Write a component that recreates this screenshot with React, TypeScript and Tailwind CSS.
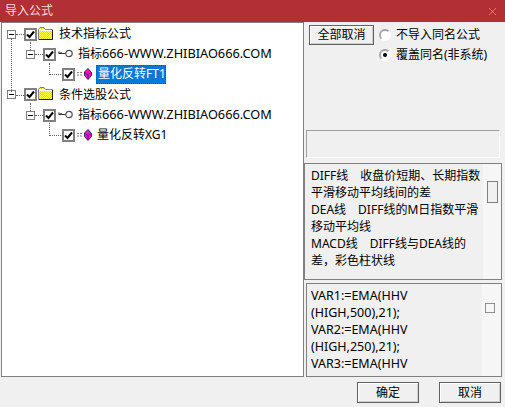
import type { ReactNode } from 'react'
import { X } from 'lucide-react'

const font = { fontFamily: '"Noto Sans", "Noto Sans CJK SC", sans-serif' }

function Expander() {
  return (
    <span className="flex h-[9px] w-[9px] shrink-0 items-center justify-center border border-[#808080] bg-white">
      <span className="h-px w-[5px] bg-black" />
    </span>
  )
}

function Check() {
  return (
    <span className="flex h-[13px] w-[13px] shrink-0 items-center justify-center border-2 border-[#808080] bg-white">
      <svg width="9" height="9" viewBox="0 0 9 9">
        <path d="M1 4.5 L3.5 7 L8 1.5" fill="none" stroke="#000" strokeWidth="2" />
      </svg>
    </span>
  )
}

function Folder({ id }: { id: string }) {
  return (
    <svg width="15" height="13" viewBox="0 0 15 13" className="shrink-0">
      <defs>
        <pattern id={id} width="2" height="2" patternUnits="userSpaceOnUse">
          <rect width="2" height="2" fill="#ffff40" />
          <rect width="1" height="1" fill="#d8d860" />
          <rect x="1" y="1" width="1" height="1" fill="#d8d860" />
        </pattern>
      </defs>
      <path d="M0.5 12.5 V2.5 L2 0.5 H6 L7.5 2.5 H14.5 V12.5 Z" fill={`url(#${id})`} stroke="#808080" />
      <path d="M1 2.5 H7 M1.5 3.5 H14" stroke="#fff" />
      <path d="M1 12.5 H14.5 V3" fill="none" stroke="#202020" />
    </svg>
  )
}

function Key() {
  return (
    <svg width="15" height="9" viewBox="0 0 15 9" className="shrink-0">
      <circle cx="11" cy="4.5" r="3.2" fill="#fff" stroke="#505050" strokeWidth="1.2" />
      <path d="M0.5 4.5 H7.5 M1 4.5 V2.5 M3 4.5 V3" fill="none" stroke="#303030" strokeWidth="1.2" />
    </svg>
  )
}

function Gem() {
  return (
    <svg width="15" height="12" viewBox="0 0 15 12" className="shrink-0">
      <path d="M0 4.5 H6 M0 7 H6" stroke="#808080" strokeDasharray="2 1" />
      <path d="M11 0.5 L14.5 4.5 V7.5 L11 11.5 L7.5 7.5 V4 Z" fill="#f010d0" stroke="#303030" />
      <path d="M7.5 4.5 L11 6.5 L14.5 4.5 M11 6.5 V11" fill="none" stroke="#80107a" />
    </svg>
  )
}

function Row({ indent, children, h = 'h-5' }: { indent: string; children: ReactNode; h?: string }) {
  return <div className={`flex ${h} items-center ${indent}`}>{children}</div>
}

function Button({ children, className }: { children: ReactNode; className: string }) {
  return (
    <button className={`flex items-center justify-center border border-[#606060] bg-[#f0f0f0] text-[12px] text-black shadow-[inset_1px_1px_0_#fff,inset_-1px_-1px_0_#d0d0d0] ${className}`}>
      {children}
    </button>
  )
}

function Radio({ on, label }: { on?: boolean; label: string }) {
  return (
    <div className="flex h-5 items-center">
      <span className="flex h-[12px] w-[12px] items-center justify-center rounded-full border-2 border-b-white border-l-[#a8a8a8] border-r-white border-t-[#a0a0a0] bg-white">
        {on && <span className="h-[4px] w-[4px] rounded-full bg-black" />}
      </span>
      <span className="ml-[5px] text-[12px] text-black">{label}</span>
    </div>
  )
}

function Dots({ className }: { className: string }) {
  return <span className={`absolute border-dotted border-[#606060] ${className}`} />
}

function SiteLabel() {
  return (
    <span className="ml-[5px] whitespace-nowrap">
      指标<span className="text-[12.75px]">666-WWW.ZHIBIAO666.COM</span>
    </span>
  )
}

export default function App() {
  return (
    <div className="flex h-[407px] w-[505px] flex-col overflow-hidden bg-[#f0f0f0]" style={font}>
      <div className="flex h-[22px] shrink-0 items-center justify-between bg-[#b22f35] pl-[5px] pr-[6px]">
        <span className="text-[12px] text-[#f4dcdc]">导入公式</span>
        <X className="h-[13px] w-[13px] text-[#e8c4c4]" strokeWidth={1} />
      </div>

      <div className="flex min-h-0 flex-1">
        <div className="relative ml-px h-[355px] w-[303px] shrink-0 border border-[#808080] bg-white pl-[4px] pt-[1px] text-[12px] text-black">
          <Dots className="left-[9px] top-[15px] h-[54px] border-l" />
          <Dots className="left-[14px] top-[11px] w-[8px] border-t" />
          <Dots className="left-[14px] top-[72px] w-[8px] border-t" />
          <Dots className="left-[28px] top-[19px] h-[8px] border-l" />
          <Dots className="left-[33px] top-[31px] w-[8px] border-t" />
          <Dots className="left-[47px] top-[40px] h-[12px] w-[14px] border-b border-l" />
          <Dots className="left-[28px] top-[80px] h-[8px] border-l" />
          <Dots className="left-[33px] top-[92px] w-[8px] border-t" />
          <Dots className="left-[47px] top-[100px] h-[13px] w-[14px] border-b border-l" />

          <Row indent="pl-px">
            <Expander />
            <span className="ml-[8px]"><Check /></span>
            <span className="ml-px -mt-[2px]"><Folder id="dither-a" /></span>
            <span className="ml-[6px]">技术指标公式</span>
          </Row>
          <Row indent="pl-[20px]">
            <Expander />
            <span className="ml-[8px]"><Check /></span>
            <span className="ml-[2px] -mt-[2px]"><Key /></span>
            <SiteLabel />
          </Row>
          <Row indent="pl-[56px]">
            <Check />
            <span className="ml-[2px]"><Gem /></span>
            <span className="ml-[4px] flex h-[19px] w-[70px] items-center whitespace-nowrap border border-dotted border-[#804000] bg-[#0a78d7] pl-px text-white">量化反转FT1</span>
          </Row>
          <Row indent="pl-px" h="h-[21px]">
            <Expander />
            <span className="ml-[8px]"><Check /></span>
            <span className="ml-px -mt-[2px]"><Folder id="dither-b" /></span>
            <span className="ml-[6px]">条件选股公式</span>
          </Row>
          <Row indent="pl-[20px]">
            <Expander />
            <span className="ml-[8px]"><Check /></span>
            <span className="ml-[2px] -mt-[2px]"><Key /></span>
            <SiteLabel />
          </Row>
          <Row indent="pl-[56px]">
            <Check />
            <span className="ml-[2px]"><Gem /></span>
            <span className="ml-[5px] whitespace-nowrap">量化反转XG1</span>
          </Row>
        </div>

        <div className="flex min-w-0 flex-1 flex-col">
          <div className="flex h-[108px] shrink-0 pl-[5px] pt-[3px]">
            <Button className="h-[20px] w-[65px]">全部取消</Button>
            <div className="ml-[5px] flex flex-col">
              <Radio label="不导入同名公式" />
              <Radio on label="覆盖同名(非系统)" />
            </div>
          </div>
          <div className="ml-[2px] h-[28px] w-[194px] shrink-0 border border-[#a0a0a0] border-b-white border-r-white" />
          <div className="mt-[5px] flex h-[117px] w-[198px] shrink-0 border border-[#808080] bg-[#f6f6f6]">
            <div className="h-full w-[178px] bg-[#f0f0f0] pl-[6px] pt-[3px] text-[12px] leading-[17px] text-black">
              <div>DIFF线　收盘价短期、长期指数</div>
              <div>平滑移动平均线间的差</div>
              <div>DEA线　DIFF线的M日指数平滑</div>
              <div>移动平均线</div>
              <div>MACD线　DIFF线与DEA线的</div>
              <div>差，彩色柱状线</div>
            </div>
            <div className="ml-[4px] mt-[17px] h-[22px] w-[11px] border border-[#808080] bg-[#f0f0f0]" />
          </div>
          <div className="ml-[2px] mt-[3px] flex h-[94px] w-[196px] shrink-0 border border-[#808080] bg-[#f6f6f6]">
            <div className="h-full w-[175px] bg-[#f0f0f0] pl-[4px] pt-[3px] text-[12.5px] leading-[17px] text-black">
              <div>VAR1:=EMA(HHV</div>
              <div>(HIGH,500),21);</div>
              <div>VAR2:=EMA(HHV</div>
              <div>(HIGH,250),21);</div>
              <div>VAR3:=EMA(HHV</div>
            </div>
            <div className="ml-[3px] mt-[19px] h-[10px] w-[10px] border border-[#909090]" />
          </div>
        </div>
      </div>

      <div className="flex h-[30px] shrink-0 justify-end gap-[20px] pr-[4px] pt-[5px]">
        <Button className="h-[21px] w-[62px]">确定</Button>
        <Button className="h-[21px] w-[62px]">取消</Button>
      </div>
    </div>
  )
}
